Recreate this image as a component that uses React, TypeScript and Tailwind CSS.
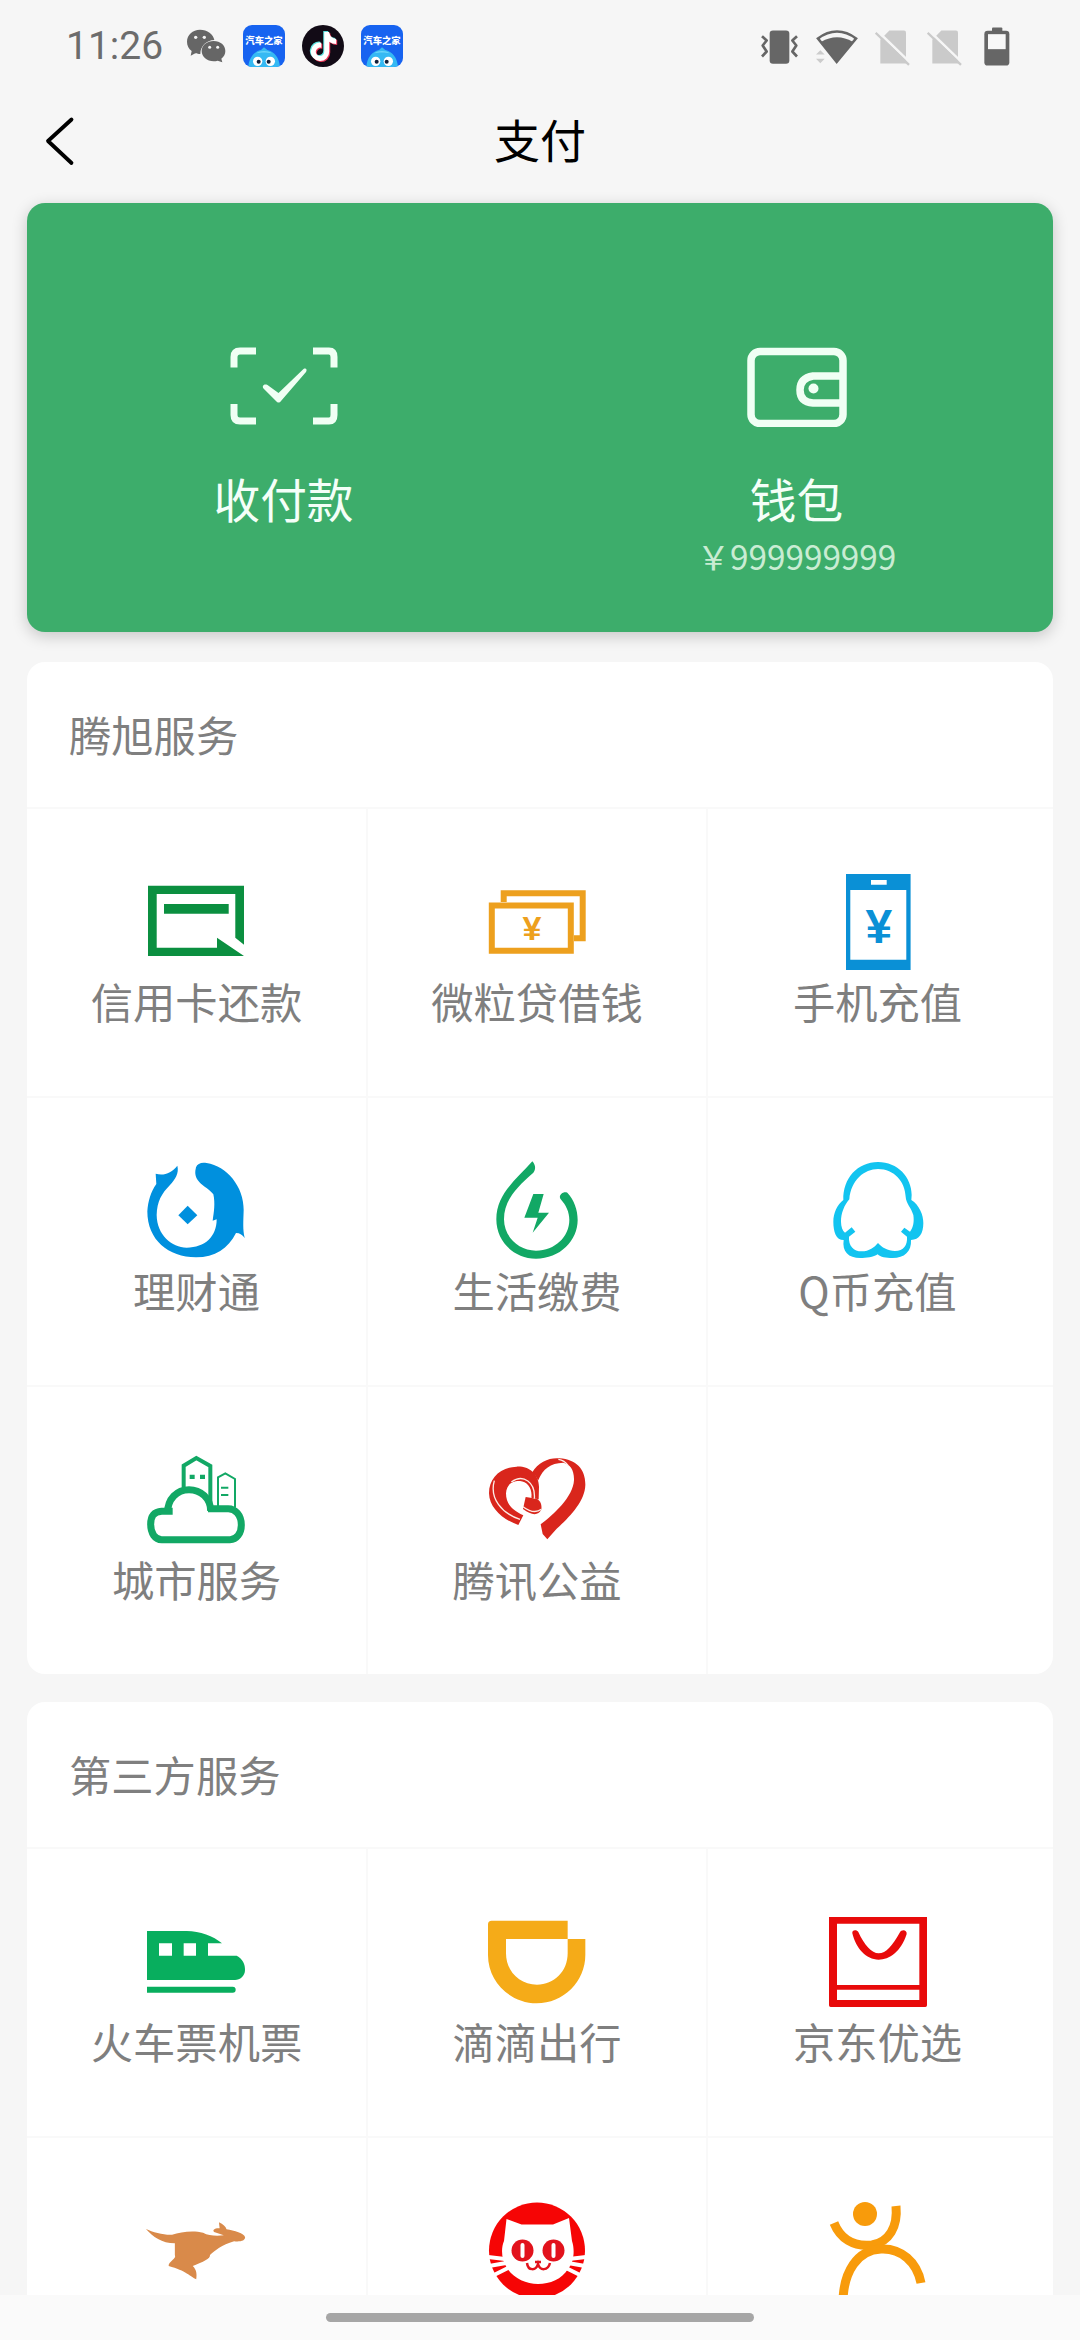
import type { ReactNode } from "react"
import { FaTiktok } from "react-icons/fa6"

interface Service {
    id: string
    name?: string
    icon: ReactNode
}

const ICON = "w-[98px] h-[98px] shrink-0"

function WechatIcon() {
    return (
        <svg viewBox="441 87 117 102" className="w-[39px] h-[34px]">
            <path fill="#666" d="M480 89c-22 0-39 16-39 36 0 11 5 21 14 28l-3 14 14-7c5 2 10 2 15 2 0-24 18-41 42-42-3-18-21-31-43-31z" />
            <path fill="#666" d="M521 123c-20 0-36 13-36 30s16 31 36 31c4 0 8-1 12-2l14 5-3-11c8-6 12-14 12-23 0-17-15-30-35-30z" />
            <g fill="#f5f5f5">
                <circle cx="467" cy="112" r="5" />
                <circle cx="493" cy="112" r="5" />
                <circle cx="509" cy="142" r="4.5" />
                <circle cx="533" cy="142" r="4.5" />
            </g>
        </svg>
    )
}

function AutohomeIcon() {
    return (
        <div className="relative w-[42px] h-[42px] rounded-[9px] overflow-hidden bg-[#1763f0]">
            <svg viewBox="612 75 126 126" className="w-full h-full">
                <path fill="#35b9f3" d="M628 201c2-28 18-47 38-51l9-8 10 8c20 4 36 23 38 51z" />
                <path fill="#6fd6fa" d="M652 160c12-9 34-9 46 0-12-3-34-3-46 0z" />
                <circle cx="656" cy="184" r="14" fill="#fff" />
                <circle cx="694" cy="184" r="14" fill="#fff" />
                <circle cx="659" cy="185" r="6" fill="#12203a" />
                <circle cx="689" cy="185" r="6" fill="#12203a" />
                <text x="675" y="133" textAnchor="middle" fontSize="28" fontWeight="900" fill="#fff" fontFamily="'Noto Sans CJK SC', sans-serif">
                    汽车之家
                </text>
            </svg>
        </div>
    )
}

function DouyinIcon() {
    return (
        <div className="relative w-[42px] h-[42px] rounded-full bg-[#120b16]">
            <FaTiktok className="absolute left-[7px] top-[6px] w-[27px] h-[29px] text-[#5fe3e0]" />
            <FaTiktok className="absolute left-[9px] top-[8px] w-[27px] h-[29px] text-[#ee3a5c]" />
            <FaTiktok className="absolute left-[8px] top-[7px] w-[27px] h-[29px] text-white" />
        </div>
    )
}

function SimOffIcon({ className }: { className: string }) {
    return (
        <svg viewBox="465 80 105 116" className={className}>
            <path fill="#cacaca" d="M508 90h44q6 0 6 6v93h-77v-71z" />
            <path stroke="#f6f6f6" strokeWidth="8" d="M472 91l100 97" />
            <path stroke="#cacaca" strokeWidth="7" d="M467 97l100 96" />
        </svg>
    )
}

function StatusBar() {
    return (
        <div className="h-[92px] pl-[66px] pr-[70px] flex items-center justify-between">
            <div className="flex items-center">
                <span className="w-[97px] text-[39px] leading-none font-[450] text-[#6c6c6c] font-[Roboto,sans-serif]">11:26</span>
                <div className="ml-6 flex items-center gap-[17px]">
                    <WechatIcon />
                    <AutohomeIcon />
                    <DouyinIcon />
                    <AutohomeIcon />
                </div>
            </div>
            <div className="flex items-center">
                <svg viewBox="122 80 111 116" className="w-[37px] h-[39px]">
                    <rect x="148" y="90" width="59" height="100" rx="10" fill="#666" />
                    <g fill="none" stroke="#666" strokeWidth="8" strokeLinejoin="round">
                        <path d="M125 107l14 13-12 15 12 18-14 15" />
                        <path d="M230 107l-14 13 12 15-12 18 14 15" />
                    </g>
                </svg>
                <svg viewBox="288 80 126 116" className="ml-[18px] w-[42px] h-[39px]">
                    <path fill="none" stroke="#666" strokeWidth="8" d="M294 114c36-28 78-28 114 0l-58 70z" />
                    <path fill="#666" d="M304 124c30-18 64-18 94 0l-47 62z" />
                    <path fill="#ccc" d="M288 162l13-13 13 13zM288 175h26l-13 13z" />
                </svg>
                <SimOffIcon className="ml-[17px] w-[35px] h-[39px]" />
                <SimOffIcon className="ml-[17px] w-[35px] h-[39px]" />
                <svg viewBox="791 80 78 116" className="ml-[22px] w-[26px] h-[39px]">
                    <rect x="815" y="81" width="31" height="14" rx="3" fill="#666" />
                    <rect x="792" y="91" width="75" height="104" rx="10" fill="#666" />
                    <rect x="803" y="101" width="53" height="45" fill="#f8f8f8" />
                </svg>
            </div>
        </div>
    )
}

function NavBar() {
    return (
        <div className="relative h-[100px] pb-[8px] flex items-center justify-center">
            <svg viewBox="0 0 36 52" className="absolute left-[42px] top-[23px] w-[36px] h-[52px]" fill="none" stroke="#000" strokeWidth="3.8" strokeLinecap="round" strokeLinejoin="round">
                <path d="M29.500 4.500L6 26l23.500 22" />
            </svg>
            <h1 className="text-[46px] leading-none text-black">支付</h1>
        </div>
    )
}

function WalletPanel() {
    return (
        <div className="mt-[11px] h-[429px] rounded-[18px] bg-[#3dad6b] shadow-[0_4px_16px_rgba(0,0,0,0.2)] flex text-[#f4fff8]">
            <div className="flex-1 pt-[144px] flex flex-col items-center">
                <svg viewBox="0 0 108 80" className="w-[108px] h-[80px]" fill="none" stroke="#f0fff4" strokeWidth="7">
                    <path d="M4 20.500V10q0-6 6-6h16M83 4h16q5 0 5 6v10.500M104 57v11q0 6-5 6H83M26 74H10q-6 0-6-6V57" />
                    <path fill="#f0fff4" stroke="none" d="M33.500 41.500c-2-3 1-5 4-3.500L48.500 46 73.500 22c2.500-1.500 4 .8 2.500 3L51 54c-1.500 2-3.500 2-5 0z" />
                </svg>
                <span className="mt-[38px] text-[46.700px] leading-[66px]">收付款</span>
            </div>
            <div className="flex-1 pt-[144px] flex flex-col items-center">
                <svg viewBox="0 0 100 80" className="w-[100px] h-[80px]" fill="none" stroke="#f0fff4" strokeWidth="7.500">
                    <rect x="4" y="4.500" width="92" height="72" rx="9" />
                    <path d="M94 29H66q-13 2-13 14t13 13h28" />
                    <circle cx="66.500" cy="41.500" r="5" fill="#f0fff4" stroke="none" />
                </svg>
                <span className="mt-[38px] text-[46.700px] leading-[66px]">钱包</span>
                <span className="text-[33.300px] leading-[50px] text-[#c9ecd3] whitespace-nowrap">￥999999999</span>
            </div>
        </div>
    )
}

const tencentServices: Service[] = [
    {
        id: "credit",
        name: "信用卡还款",
        icon: (
            <svg viewBox="0 0 98 98" className={ICON} fill="#0b8f40">
                <path d="M0 12.700h96v59l-8.700-7V21H8.700v53.700H69v-10L96 83H0z" />
                <path d="M16 31h64.700v9.700H16z" />
            </svg>
        ),
    },
    {
        id: "loan",
        name: "微粒贷借钱",
        icon: (
            <svg viewBox="0 0 98 98" className={ICON} fill="none" stroke="#eda01e" strokeWidth="6">
                <path d="M15.700 29V20.200h79v45H86" />
                <path d="M3.800 32.500h79v45.300h-79z" />
                <text x="44" y="66.500" textAnchor="middle" fontSize="34" fontWeight="700" fill="#eda01e" stroke="none" fontFamily="'Liberation Sans', sans-serif">
                    ¥
                </text>
            </svg>
        ),
    },
    {
        id: "phone",
        name: "手机充值",
        icon: (
            <svg viewBox="0 0 98 98" className={ICON} fill="#0a90d6">
                <path fillRule="evenodd" d="M17 1h64.600v96H17zM21.300 17v69.700h56V17zM42 7v4.700h15.700V7z" />
                <text x="49.800" y="69.500" textAnchor="middle" fontSize="48" fontWeight="700" fontFamily="'Liberation Sans', sans-serif">
                    ¥
                </text>
            </svg>
        ),
    },
    {
        id: "wealth",
        name: "理财通",
        icon: (
            <svg viewBox="84 66 294 294" className={ICON} fill="#0090de" overflow="visible">
                <path d="M228 82C232 70 245 66 260 69 320 78 372 140 371 210 370 245 368 268 374 294 368 285 360 279 348 279 325 325 285 352 228 352 145 352 82 300 82 214 84 185 92 155 109 132L107 101C130 108 155 100 172 77 178 100 165 118 150 135 125 160 111 185 110 225 111 285 155 323 200 323 255 323 290 290 290 238L278 242C282 215 286 190 280 163 265 140 222 130 226 92z" />
                <path d="M203 197l29 29-29 27-28-27z" />
            </svg>
        ),
    },
    {
        id: "bills",
        name: "生活缴费",
        icon: (
            <svg viewBox="1104 66 294 294" className={ICON} fill="#12a865" overflow="visible">
                <path d="M1237 64C1190 118 1129 160 1129 238 1129 305 1182 356 1248 356 1320 356 1373 302 1373 240 1373 208 1362 180 1342 158 1330 152 1315 165 1321 176 1338 195 1348 215 1348 240 1348 290 1305 332 1248 332 1195 332 1152 290 1152 238 1152 185 1185 145 1240 98 1248 88 1247 75 1237 64z" />
                <path d="M1240 162h31l-16 56h32l-49 60 15-45h-40z" />
            </svg>
        ),
    },
    {
        id: "qcoin",
        name: "Q币充值",
        icon: (
            <svg viewBox="204 66 294 294" className={ICON} fill="#12c4f0">
                <path
                    fillRule="evenodd"
                    d="M351 66C410 66 452 112 452 165L451 180C475 195 487 225 487 250 487 280 475 300 450 300 452 335 430 354 395 354 375 354 358 352 350 343 338 352 315 354 298 354 262 354 243 335 248 300 225 300 217 275 217 245 217 220 228 195 247 180 245 115 290 66 351 66zM351 87C310 87 270 120 265 178 250 195 240 220 240 245 240 260 245 272 252 278L272 262 283 275 264 290C262 318 278 334 302 334 325 334 340 322 351 309 362 322 380 333 402 333 428 333 440 315 438 290L420 275 430 263 447 275C457 262 460 245 457 225 452 205 435 190 434 170 432 125 400 87 351 87z"
                />
            </svg>
        ),
    },
    {
        id: "city",
        name: "城市服务",
        icon: (
            <svg viewBox="84 63 294 294" className={ICON} fill="none" stroke="#12a865" overflow="visible">
                <path strokeWidth="12" d="M191 180v-73l38-23 42 24v130" />
                <path strokeWidth="6" d="M294 228v-86l22-12 29 17v86M303 173h22M303 195h22" />
                <path strokeWidth="21" d="M158 244H125C100 246 92 260 92 283 92 310 105 329 125 329H330C350 329 364 310 364 285 364 255 345 236 325 236H264M142 252C142 205 172 179 207 179 242 179 272 205 272 243" />
                <path fill="#12a865" stroke="none" d="M209 134h15v13h-15zM240 134h15v13h-15z" />
            </svg>
        ),
    },
    {
        id: "charity",
        name: "腾讯公益",
        icon: (
            <svg viewBox="1104 63 294 294" className={ICON} fill="#d9261c">
                <path d="M1236 128C1255 95 1290 82 1318 85 1370 88 1397 120 1396 165 1395 215 1345 265 1310 296L1282 328 1268 312 1262 283C1300 255 1360 200 1362 150 1363 120 1350 102 1330 98 1290 100 1270 115 1254 152 1250 140 1245 133 1236 128z" />
                <path d="M1256 208L1257 170C1256 130 1225 108 1190 110 1140 112 1107 145 1107 190 1108 235 1150 270 1195 285L1210 256C1175 240 1158 220 1158 190 1160 160 1180 152 1200 153 1222 155 1238 175 1234 203z" />
                <path d="M1217 201L1250 206C1262 212 1266 225 1264 238 1255 258 1235 257 1209 237z" />
                <g fill="none" stroke="#fdece6" strokeWidth="4">
                    <path d="M1123 152C1108 205 1145 250 1200 268M1174 156C1210 130 1247 158 1243 206M1209 230C1225 242 1245 252 1264 238M1315 88C1328 90 1338 97 1344 106" />
                </g>
            </svg>
        ),
    },
]

const thirdPartyServices: Service[] = [
    {
        id: "train",
        name: "火车票机票",
        icon: (
            <svg viewBox="84 69 294 294" className={ICON} fill="#08ae5e" overflow="visible">
                <path fillRule="evenodd" d="M81 123H200C240 124 280 138 306 160H264V197H350C368 205 376 225 375 240 375 258 360 270 345 270H81zM117 160v37h39v-37zM191 160v37h37v-37z" />
                <path d="M81 290h257q9 0 9 9t-9 9H81z" />
            </svg>
        ),
    },
    {
        id: "didi",
        name: "滴滴出行",
        icon: (
            <svg viewBox="1104 69 294 294" className={ICON} fill="#f5ab18">
                <path d="M1115 92H1343V147H1158V190C1158 245 1200 284 1251 284 1302 284 1343 245 1343 190V147H1396V195C1396 275 1330 340 1250 340 1170 340 1104 275 1104 195V103Q1104 92 1115 92z" />
            </svg>
        ),
    },
    {
        id: "jd",
        name: "京东优选",
        icon: (
            <svg viewBox="204 69 294 294" className={ICON} fill="#e80a0a">
                <path fillRule="evenodd" d="M204 81H498V346q0 5-5 5H209q-5 0-5-5zM228 101V285H475V101zM228 299V330H475V299z" />
                <path d="M274 130C272 118 288 118 292 126 310 165 332 190 353 190 375 190 395 165 416 128 422 117 438 119 437 132 420 185 385 209 353 209 315 209 285 175 274 130z" />
            </svg>
        ),
    },
    {
        id: "kangaroo",
        icon: (
            <svg viewBox="215 66 142.300 294" preserveAspectRatio="none" className={ICON} fill="#d98a4a" overflow="visible">
                <path d="M212 147C222 157 240 166 250 164 262 156 280 150 295 158 303 168 315 168 325 166L311 156C308 150 312 144 319 145L318 127C324 132 328 140 329 148 340 152 355 160 356 172 356 182 350 186 340 184 322 195 312 212 305 225 306 236 295 246 280 258 286 270 286 285 285 298 277 290 270 272 245 258 244 245 257 237 254 225L254 190C235 190 222 170 212 147z" />
            </svg>
        ),
    },
    {
        id: "cat",
        icon: (
            <svg viewBox="0 0 98 98" className={ICON}>
                <circle cx="49" cy="48.500" r="48" fill="#f60505" />
                <path fill="#fff" d="M18.500 17l15 5.500H65L81 16l3 23C87 48 86 60 80 67 74 77 62 82 50 82S25 76 19 66C13 57 13 46 16 39z" />
                <g fill="none" stroke="#fff" strokeWidth="4">
                    <path d="M0 55l17 2M1 64l17-3M6 73l14-7M98 55l-17 2M97 64l-17-3M92 73l-14-7" />
                </g>
                <g fill="#e2121c">
                    <circle cx="34.500" cy="48.500" r="11" />
                    <circle cx="65.500" cy="48.500" r="11" />
                </g>
                <g fill="#fff">
                    <rect x="32.500" y="41" width="4" height="15" rx="2" />
                    <rect x="63.500" y="41" width="4" height="15" rx="2" />
                </g>
                <path fill="none" stroke="#e2121c" strokeWidth="2.500" d="M39 61c1 8 9 8 11 1 2 7 10 7 12-1M47 60h6" />
            </svg>
        ),
    },
    {
        id: "dianping",
        icon: (
            <svg viewBox="0 0 98 98" className={ICON} fill="none" stroke="#f89b0b" strokeWidth="9">
                <circle cx="36" cy="12" r="12" fill="#f89b0b" stroke="none" />
                <path d="M5 21C11 36 24 45 43 43 60 40 69 25 67 4" />
                <path d="M14 98C15 70 28 48 52 47 72 46 88 60 92 81" />
            </svg>
        ),
    },
]

function ServiceSection({ title, services }: { title: string; services: Service[] }) {
    // pad the last row so its dividers are drawn too
    const blanks = (3 - (services.length % 3)) % 3

    return (
        <section className="rounded-[18px] bg-white overflow-hidden">
            <h2 className="h-[145px] pt-[40px] pl-[42px] text-[42.300px] leading-[63px] text-[#7f7f7f]">{title}</h2>
            <div className="grid grid-cols-[341px_340px_345px]">
                {services.map((service) => (
                    <div key={service.id} className="h-[289px] pt-[64px] flex flex-col items-center border-t-2 border-r-2 border-[#f9f9f9] nth-[3n]:border-r-0 nth-[3n]:pr-[6px]">
                        {service.icon}
                        {service.name && <span className="-mt-[2px] text-[42.300px] leading-[64px] text-[#7f7f7f] whitespace-nowrap">{service.name}</span>}
                    </div>
                ))}
                {Array.from({ length: blanks }, (_, i) => (
                    <div key={i} className="h-[289px] border-t-2 border-[#f9f9f9]" />
                ))}
            </div>
        </section>
    )
}

export default function App() {
    return (
        <div className="w-[1080px] h-[2340px] overflow-hidden bg-[#f6f6f6] font-['Noto_Sans_CJK_SC',sans-serif]">
            <div className="h-[2295px] overflow-hidden">
                <StatusBar />
                <NavBar />
                <main className="px-[27px] flex flex-col">
                    <WalletPanel />
                    <div className="mt-[30px] flex flex-col gap-[28px]">
                        <ServiceSection title="腾旭服务" services={tencentServices} />
                        <ServiceSection title="第三方服务" services={thirdPartyServices} />
                    </div>
                </main>
            </div>
            <div className="h-[45px] pt-[18px] flex justify-center bg-[#fafafa]">
                <div className="w-[428px] h-[9px] rounded-full bg-[#a6a6a6]" />
            </div>
        </div>
    )
}
